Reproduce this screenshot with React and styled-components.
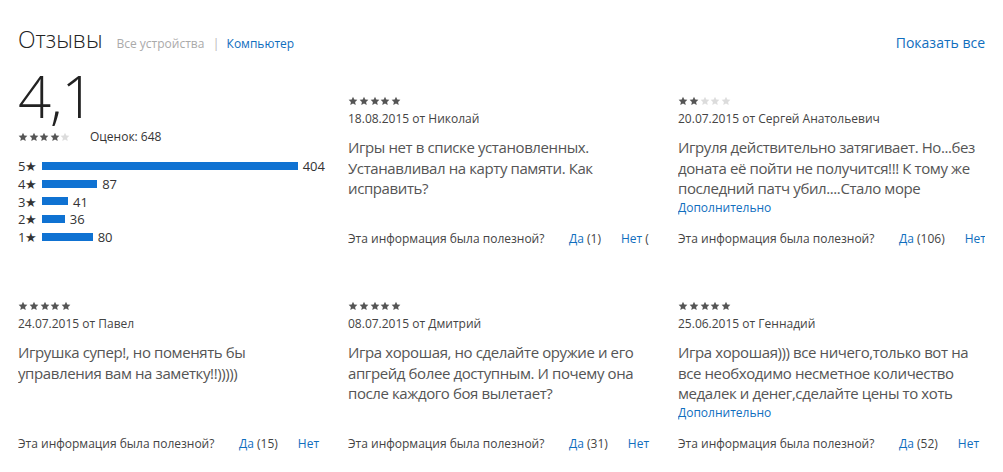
import React from 'react';
import styled, { createGlobalStyle } from 'styled-components';

const Global = createGlobalStyle`
  html, body { margin: 0; padding: 0; background: #fff; }
  body { font-family: "Open Sans", "Noto Sans", sans-serif; color: #333; }
`;

const BLUE = '#106ebe';

const Page = styled.div`
  width: 1003px;
  box-sizing: border-box;
  padding: 24px 18px 0 18px;
`;

const Header = styled.div`
  display: flex;
  align-items: baseline;
  justify-content: space-between;
`;

const TitleGroup = styled.div`
  display: flex;
  align-items: baseline;
`;

const Title = styled.h2`
  margin: 0 14px 0 0;
  font-size: 23px;
  font-weight: 300;
  color: #222;
  line-height: 30px;
`;

const Filter = styled.span`
  font-size: 12px;
  color: ${p => (p.$active ? BLUE : '#aaa')};
`;

const Sep = styled.span`
  font-size: 13px;
  color: #bbb;
  margin: 0 7px 0 8px;
`;

const ShowAll = styled.a`
  font-size: 14px;
  color: ${BLUE};
  text-decoration: none;
`;

const Grid = styled.div`
  display: grid;
  grid-template-columns: repeat(3, 307px);
  column-gap: 23px;
  row-gap: 25px;
  margin-top: 14px;
  align-items: start;
`;

const Summary = styled.div`
  display: flex;
  flex-direction: column;
`;

const BigRating = styled.div`
  font-size: 58px;
  font-weight: 300;
  line-height: 56px;
  color: #222;
  letter-spacing: -1px;
`;

const SummaryMeta = styled.div`
  display: flex;
  align-items: center;
  margin-top: 4px;
  gap: 20px;
`;

const Count = styled.span`
  font-size: 12px;
  color: #333;
`;

const Bars = styled.div`
  display: flex;
  flex-direction: column;
  margin-top: 12px;
`;

const BarRow = styled.div`
  display: flex;
  align-items: center;
  height: 17.8px;
`;

const BarLabel = styled.span`
  width: 24px;
  font-size: 13px;
  color: #333;
`;

const Bar = styled.div`
  height: 8px;
  background: #0f72d2;
`;

const BarCount = styled.span`
  margin-left: 5px;
  font-size: 13px;
  color: #333;
`;

const Card = styled.div`
  height: 180px;
  box-sizing: border-box;
  padding-top: 28px;
  padding-bottom: 1px;
  display: flex;
  flex-direction: column;
  overflow: hidden;
`;

const StarsWrap = styled.div`
  display: flex;
  gap: ${p => (p.$gap != null ? p.$gap : 0.75)}px;
  height: 10px;
  align-items: center;
`;

const DateLine = styled.div`
  margin-top: 5px;
  font-size: 12px;
  line-height: 16px;
  color: #444;
`;

const Body = styled.p`
  margin: 10px 0 0 0;
  width: 301px;
  font-size: 15px;
  letter-spacing: -0.4px;
  line-height: 20.5px;
  max-height: 61.5px;
  overflow: hidden;
  color: #555;
`;

const More = styled.a`
  margin-top: 1px;
  font-size: 12px;
  line-height: 15px;
  color: ${BLUE};
  text-decoration: none;
`;

const Helpful = styled.div`
  margin-top: auto;
  display: flex;
  align-items: baseline;
  white-space: nowrap;
  overflow: hidden;
  font-size: 12px;
  line-height: 16px;
  color: #444;
`;

const Question = styled.span`
  width: 221px;
  flex-shrink: 0;
`;

const Vote = styled.span`
  margin-left: ${p => (p.$first ? 0 : 20)}px;
  flex-shrink: 0;
`;

const VoteLink = styled.a`
  color: ${BLUE};
  text-decoration: none;
`;

const Star = ({ on, size = 10 }) => (
  <svg width={size} height={size} viewBox="0 0 24 24">
    <polygon
      points="12,1.5 15.1,8.3 22.5,9.1 17,14.1 18.5,21.5 12,17.7 5.5,21.5 7,14.1 1.5,9.1 8.9,8.3"
      fill={on ? '#555' : '#dcdcdc'}
    />
  </svg>
);

const Stars = ({ value }) => (
  <StarsWrap>
    {[1, 2, 3, 4, 5].map(i => (
      <Star key={i} on={i <= value} />
    ))}
  </StarsWrap>
);

const bars = [
  { s: 5, n: 404 },
  { s: 4, n: 87 },
  { s: 3, n: 41 },
  { s: 2, n: 36 },
  { s: 1, n: 80 },
];

const reviews = [
  {
    stars: 5,
    date: '18.08.2015',
    author: 'Николай',
    text: 'Игры нет в списке установленных. Устанавливал на карту памяти. Как исправить?',
    more: false,
    yes: 1,
    no: '(',
  },
  {
    stars: 2,
    date: '20.07.2015',
    author: 'Сергей Анатольевич',
    text: 'Игруля действительно затягивает. Но...без доната её пойти не получится!!! К тому же последний патч убил....Стало море',
    more: true,
    yes: 106,
    no: '(7)',
  },
  {
    stars: 5,
    date: '24.07.2015',
    author: 'Павел',
    text: 'Игрушка супер!, но поменять бы управления вам на заметку!!)))))',
    more: false,
    yes: 15,
    no: '',
  },
  {
    stars: 5,
    date: '08.07.2015',
    author: 'Дмитрий',
    text: 'Игра хорошая, но сделайте оружие и его апгрейд более доступным. И почему она после каждого боя вылетает?',
    more: false,
    yes: 31,
    no: '',
  },
  {
    stars: 5,
    date: '25.06.2015',
    author: 'Геннадий',
    text: 'Игра хорошая))) все ничего,только вот на все необходимо несметное количество медалек и денег,сделайте цены то хоть',
    more: true,
    yes: 52,
    no: '',
  },
];

const ReviewCard = ({ r }) => (
  <Card>
    <Stars value={r.stars} />
    <DateLine>
      {r.date} от {r.author}
    </DateLine>
    <Body>{r.text}</Body>
    {r.more && <More href="#">Дополнительно</More>}
    <Helpful>
      <Question>Эта информация была полезной?</Question>
      <Vote $first>
        <VoteLink href="#">Да</VoteLink> ({r.yes})
      </Vote>
      <Vote>
        <VoteLink href="#">Нет</VoteLink>
        {r.no ? ` ${r.no}` : ''}
      </Vote>
    </Helpful>
  </Card>
);

export default function App() {
  return (
    <>
      <Global />
      <Page>
        <Header>
          <TitleGroup>
            <Title>Отзывы</Title>
            <Filter>Все устройства</Filter>
            <Sep>|</Sep>
            <Filter $active>Компьютер</Filter>
          </TitleGroup>
          <ShowAll href="#">Показать все</ShowAll>
        </Header>
        <Grid>
          <Summary>
            <BigRating>4,1</BigRating>
            <SummaryMeta>
              <StarsWrap $gap={0.5}>
                {[1, 2, 3, 4, 5].map(i => (
                  <Star key={i} on={i <= 4} size={10} />
                ))}
              </StarsWrap>
              <Count>Оценок: 648</Count>
            </SummaryMeta>
            <Bars>
              {bars.map(b => (
                <BarRow key={b.s}>
                  <BarLabel>{b.s}★</BarLabel>
                  <Bar style={{ width: `${(b.n / 404) * 256}px` }} />
                  <BarCount>{b.n}</BarCount>
                </BarRow>
              ))}
            </Bars>
          </Summary>
          {reviews.map((r, i) => (
            <ReviewCard key={i} r={r} />
          ))}
        </Grid>
      </Page>
    </>
  );
}
